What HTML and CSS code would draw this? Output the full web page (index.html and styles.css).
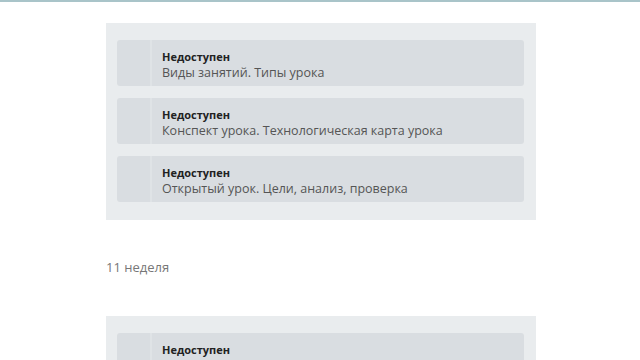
FILE: index.html
```html
<!DOCTYPE html>
<html>
<head>
<meta charset="utf-8">
<link rel="stylesheet" href="styles.css">
</head>
<body>
<div class="topline"></div>
<div class="page">

  <div class="week">
    <div class="lesson">
      <div class="lesson-icon"></div>
      <div class="lesson-body">
        <div class="lesson-state">Недоступен</div>
        <div class="lesson-title">Виды занятий. Типы урока</div>
      </div>
    </div>
    <div class="lesson">
      <div class="lesson-icon"></div>
      <div class="lesson-body">
        <div class="lesson-state">Недоступен</div>
        <div class="lesson-title">Конспект урока. Технологическая карта урока</div>
      </div>
    </div>
    <div class="lesson">
      <div class="lesson-icon"></div>
      <div class="lesson-body">
        <div class="lesson-state">Недоступен</div>
        <div class="lesson-title">Открытый урок. Цели, анализ, проверка</div>
      </div>
    </div>
  </div>

  <div class="week-name">11 неделя</div>

  <div class="week week-cut">
    <div class="lesson">
      <div class="lesson-icon"></div>
      <div class="lesson-body">
        <div class="lesson-state">Недоступен</div>
      </div>
    </div>
  </div>

</div>
</body>
</html>
```
FILE: styles.css
```css
body { margin: 0; background: #fff; font-family: "Open Sans", "Noto Sans", sans-serif; overflow: hidden; height: 360px; }

.topline { height: 2px; background: #a9c4c9; }

.page { width: 430px; margin: 21px 0 0 106px; }

.week { background: #e9ecee; padding: 17px 12px 18px 11px; display: flex; flex-direction: column; gap: 12px; }

.lesson { display: flex; height: 46px; background: #d9dde1; border-radius: 3px; }

.lesson-icon { width: 33px; border-right: 2px solid #dfe3e6; }

.lesson-body { padding: 9px 0 0 10px; }

.lesson-state { font-size: 11px; font-weight: 700; color: #222; line-height: 15px; }

.lesson-title { font-size: 12.5px; color: #555; line-height: 17px; }

.week-name { font-size: 13px; color: #777; margin: 38px 0 40px; line-height: 18px; }
```
